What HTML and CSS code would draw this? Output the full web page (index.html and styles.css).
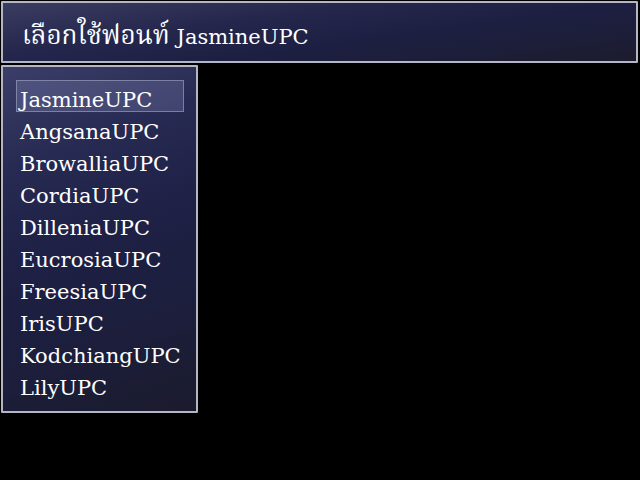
FILE: index.html
```html
<!DOCTYPE html>
<html lang="th">
<head>
<meta charset="utf-8">
<title>เลือกใช้ฟอนท์</title>
<link rel="stylesheet" href="styles.css">
</head>
<body>
<div class="screen">
  <div class="window title-window">
    <div class="title"><span class="thai">เลือกใช้ฟอนท์</span> JasmineUPC</div>
  </div>
  <div class="window list-window">
    <ul class="font-list">
      <li class="item selected">JasmineUPC</li>
      <li class="item">AngsanaUPC</li>
      <li class="item">BrowalliaUPC</li>
      <li class="item">CordiaUPC</li>
      <li class="item">DilleniaUPC</li>
      <li class="item">EucrosiaUPC</li>
      <li class="item">FreesiaUPC</li>
      <li class="item">IrisUPC</li>
      <li class="item">KodchiangUPC</li>
      <li class="item">LilyUPC</li>
    </ul>
  </div>
</div>
</body>
</html>
```
FILE: styles.css
```css
html, body {
  margin: 0;
  padding: 0;
  background: #000;
}
body {
  width: 640px;
  height: 480px;
  overflow: hidden;
  font-family: "DejaVu Serif", "Noto Serif Thai", "Noto Sans Thai", "Loma", "Garuda", serif;
  font-size: 21px;
  color: #fff;
}
.screen {
  display: flex;
  flex-direction: column;
  align-items: flex-start;
  padding: 1px 0 0 1px;
  gap: 2px;
}
.window {
  box-sizing: border-box;
  border: 2px solid #b4b6c6;
  border-radius: 1px;
}
.title-window {
  width: 637px;
  height: 62px;
  background: linear-gradient(172deg, #3a3c62 0%, #24264c 35%, #1d1f42 60%, #1c1c2e 100%);
  padding: 16px 0 0 19px;
}
.title {
  line-height: 32px;
  white-space: nowrap;
}
.thai {
  font-size: 26px;
}
.list-window {
  width: 197px;
  height: 348px;
  background: linear-gradient(160deg, #3b3e68 0%, #272a52 25%, #1e2045 50%, #1c1e3c 75%, #1a1b2c 100%);
  padding: 13px 0 0 13px;
}
.font-list {
  list-style: none;
  margin: 0;
  padding: 0;
  display: flex;
  flex-direction: column;
}
.item {
  box-sizing: border-box;
  width: 168px;
  height: 32px;
  padding: 6px 0 0 3px;
  line-height: 26px;
  white-space: nowrap;
  border: 1px solid transparent;
}
.item.selected {
  background: rgba(160, 170, 220, 0.22);
  border-color: rgba(190, 195, 225, 0.45);
}
```
